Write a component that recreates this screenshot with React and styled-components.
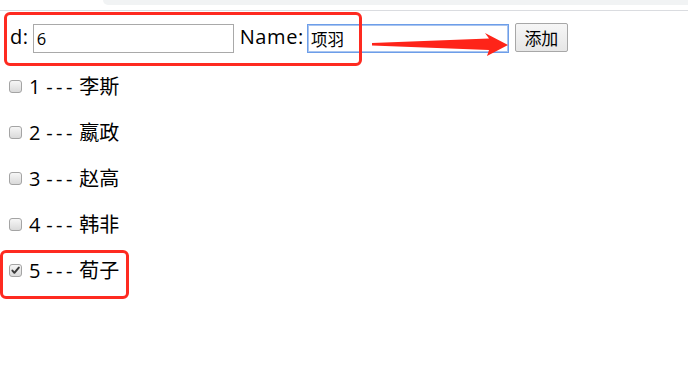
import React from "react";
import styled, { createGlobalStyle } from "styled-components";

const GlobalStyle = createGlobalStyle`
  html, body { margin: 0; padding: 0; background: #ffffff; }
  body {
    font-family: "Open Sans", "Noto Sans CJK SC", sans-serif;
    color: #000000;
  }
`;

const Page = styled.div`
  position: relative;
  width: 688px;
  height: 372px;
  overflow: hidden;
  background: #ffffff;
`;

const TopBar = styled.div`
  display: flex;
  height: 10px;
  border-bottom: 1px solid #dadce0;
`;

const TopBarSpacer = styled.div`
  width: 103px;
`;

const TopBarTab = styled.div`
  flex: 1;
  height: 5px;
  background: #f1f3f4;
  border-bottom-left-radius: 6px;
`;

const Content = styled.main`
  padding-top: 13px;
`;

const Form = styled.div`
  display: flex;
  align-items: center;
  height: 29px;
  padding-left: 10px;
`;

const Label = styled.label`
  font-size: 20px;
  letter-spacing: 0.6px;
  line-height: 27px;
  padding-bottom: 4px;
  margin-left: ${(p) => p.$ml || 0}px;
  margin-right: ${(p) => p.$mr || 0}px;
  white-space: nowrap;
`;

const TextInput = styled.input`
  box-sizing: border-box;
  width: ${(p) => p.$w}px;
  height: 29px;
  margin: 0;
  padding: 0 3px;
  font-family: "Open Sans", "Noto Sans CJK SC", sans-serif;
  font-size: 16.5px;
  color: #000;
  background: #fff;
  border: ${(p) => (p.$focused ? "1px solid #6d9ee9" : "1px solid #a9a9a9")};
  box-shadow: ${(p) => (p.$focused ? "inset 0 0 0 1px #a9c5f0" : "none")};
  border-radius: 0;
  outline: none;
`;

const Button = styled.button`
  box-sizing: border-box;
  width: 53px;
  height: 29px;
  margin: 0 0 2px 6px;
  padding: 0;
  font-family: "Noto Sans CJK SC", sans-serif;
  font-size: 17px;
  color: #000;
  background: linear-gradient(#f6f6f6, #e6e6e6);
  border: 1px solid #a7a7a7;
  border-radius: 2px;
`;

const List = styled.ul`
  list-style: none;
  margin: 10px 0 0 0;
  padding: 0 0 0 9px;
`;

const Item = styled.li`
  display: flex;
  align-items: center;
  height: 46px;
  font-size: 20px;
  line-height: 27px;
  word-spacing: 0.5px;
  white-space: nowrap;
`;

const Box = styled.span`
  box-sizing: border-box;
  display: inline-flex;
  align-items: center;
  justify-content: center;
  width: 13px;
  height: 13px;
  margin-right: 7px;
  border: 1px solid #a4a4a4;
  border-radius: 3px;
  background: linear-gradient(#f6f6f6, #dadada);
`;

const Sep = styled.span`
  letter-spacing: 3.5px;
  margin-right: -2.5px;
`;

const Highlight = styled.div`
  position: absolute;
  box-sizing: border-box;
  left: ${(p) => p.$x}px;
  top: ${(p) => p.$y}px;
  width: ${(p) => p.$w}px;
  height: ${(p) => p.$h}px;
  border: 3px solid #fe2a20;
  border-radius: 6px;
  pointer-events: none;
`;

const Overlay = styled.svg`
  position: absolute;
  left: 0;
  top: 0;
  pointer-events: none;
`;

const people = [
  { id: 1, name: "李斯", checked: false },
  { id: 2, name: "嬴政", checked: false },
  { id: 3, name: "赵高", checked: false },
  { id: 4, name: "韩非", checked: false },
  { id: 5, name: "荀子", checked: true },
];

function CheckBox({ checked }) {
  return (
    <Box role="checkbox" aria-checked={checked}>
      {checked && (
        <svg width="11" height="11" viewBox="0 0 11 11">
          <path
            d="M2.4 5.6 L4.4 7.8 L8.8 2.6"
            fill="none"
            stroke="#3a3a3a"
            strokeWidth="2"
            strokeLinecap="round"
            strokeLinejoin="round"
          />
        </svg>
      )}
    </Box>
  );
}

export default function App() {
  return (
    <>
      <GlobalStyle />
      <Page>
        <TopBar>
          <TopBarSpacer />
          <TopBarTab />
        </TopBar>
        <Content>
          <Form>
            <Label $mr={4}>d:</Label>
            <TextInput $w={201} defaultValue="6" />
            <Label $ml={6} $mr={3}>Name:</Label>
            <TextInput $w={202} $focused defaultValue="项羽" />
            <Button>添加</Button>
          </Form>
          <List>
            {people.map((p) => (
              <Item key={p.id}>
                <CheckBox checked={p.checked} />
                <span>
                  {p.id} <Sep>---</Sep> {p.name}
                </span>
              </Item>
            ))}
          </List>
        </Content>
        <Highlight $x={4} $y={12} $w={358} $h={54} />
        <Highlight $x={0} $y={250} $w={129} $h={49} />
        <Overlay width="688" height="372" viewBox="0 0 688 372">
          <polygon
            points="372,43 489,38.5 485,33 508,45 487,56 489,50 372,45.5"
            fill="#fe2419"
          />
        </Overlay>
      </Page>
    </>
  );
}
